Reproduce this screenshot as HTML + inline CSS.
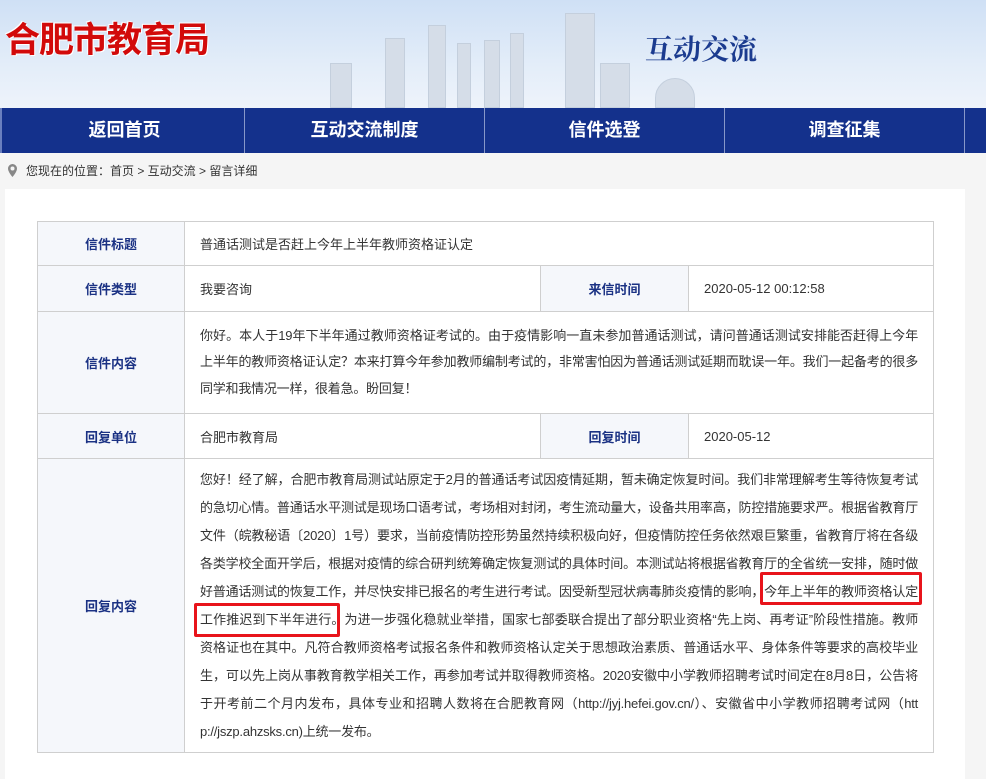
<!DOCTYPE html>
<html><head><meta charset="utf-8"><style>
*{margin:0;padding:0;box-sizing:border-box}
body{width:986px;height:767px;overflow:hidden;background:#f5f5f5;font-family:"Liberation Sans","Noto Sans CJK SC",sans-serif;position:relative}
.hdr{height:108px;background:linear-gradient(180deg,#cfe0f5 0%,#e3edf9 60%,#eef3fa 100%);position:relative;overflow:hidden}
.logo{position:absolute;left:5px;top:12px;font-size:35px;font-weight:bold;color:#d20a0a;letter-spacing:-1px;text-shadow:1px 1px 0 #fff,-1px -1px 0 #fff}
.sub{position:absolute;left:645px;top:28px;font-size:28px;font-weight:bold;color:#1b3b8f;font-family:"Noto Serif CJK SC","Liberation Serif",serif}
.bld{position:absolute;bottom:0;background:#d5dde8;border:1px solid #c4cfdd}
.nav{height:45px;background:#14318c;display:flex;padding-left:3px;border-left:2px solid #6a7fbf}
.nav div{width:240px;border-right:1px solid #8797c9;color:#fff;font-weight:bold;font-size:18px;text-align:center;line-height:45px}
.bc{height:36px;font-size:12px;color:#333;line-height:36px;padding-left:26px;position:relative}
.pin{position:absolute;left:8px;top:11px;width:9px;height:13px}
.panel{position:absolute;left:5px;top:189px;width:960px;height:590px;background:#fff}
table{position:absolute;left:37px;top:221px;width:897px;border-collapse:collapse;font-size:13px;color:#333;table-layout:fixed}
td{border:1px solid #cfcfcf;padding:0 15px;vertical-align:middle;overflow:hidden}
td.l{background:#f5f7fb;color:#1b3284;font-weight:bold;text-align:center;padding:0}
.ln{text-align:justify;text-align-last:justify;white-space:nowrap;height:26.5px;line-height:26.5px;letter-spacing:-0.22px}
.r .ln{height:28px;line-height:28px}
.box{position:absolute;border:3px solid #e8141b;border-radius:2px}
</style></head><body>
<div class="hdr">
<div class="bld" style="left:330px;width:22px;height:45px"></div>
<div class="bld" style="left:385px;width:20px;height:70px"></div>
<div class="bld" style="left:428px;width:18px;height:83px"></div>
<div class="bld" style="left:457px;width:14px;height:65px"></div>
<div class="bld" style="left:484px;width:16px;height:68px"></div>
<div class="bld" style="left:510px;width:14px;height:75px"></div>
<div class="bld" style="left:565px;width:30px;height:95px"></div>
<div class="bld" style="left:600px;width:30px;height:45px"></div>
<div class="bld" style="left:655px;width:40px;height:30px;border-radius:30px 30px 0 0"></div>
<div class="logo">合肥市教育局</div>
<div class="sub">互动交流</div>
</div>
<div class="nav"><div>返回首页</div><div>互动交流制度</div><div>信件选登</div><div>调查征集</div></div>
<div class="bc"><svg class="pin" viewBox="0 0 9 13"><path d="M4.5 0A4.5 4.5 0 0 0 0 4.5C0 8 4.5 13 4.5 13S9 8 9 4.5A4.5 4.5 0 0 0 4.5 0zm0 6.5a2 2 0 1 1 0-4 2 2 0 0 1 0 4z" fill="#888"/></svg>您现在的位置：首页 &gt; 互动交流 &gt; 留言详细</div>
<div class="panel"></div>
<table>
<colgroup><col style="width:147px"><col style="width:356px"><col style="width:148px"><col></colgroup>
<tr style="height:44px"><td class="l">信件标题</td><td colspan="3">普通话测试是否赶上今年上半年教师资格证认定</td></tr>
<tr style="height:46px"><td class="l">信件类型</td><td>我要咨询</td><td class="l">来信时间</td><td>2020-05-12 00:12:58</td></tr>
<tr style="height:102px"><td class="l">信件内容</td><td colspan="3">
<div class="ln">你好。本人于19年下半年通过教师资格证考试的。由于疫情影响一直未参加普通话测试，请问普通话测试安排能否赶得上今年</div>
<div class="ln">上半年的教师资格证认定？本来打算今年参加教师编制考试的，非常害怕因为普通话测试延期而耽误一年。我们一起备考的很多</div>
<div class="ln" style="text-align-last:left">同学和我情况一样，很着急。盼回复！</div></td></tr>
<tr style="height:45px"><td class="l">回复单位</td><td>合肥市教育局</td><td class="l">回复时间</td><td>2020-05-12</td></tr>
<tr style="height:294px" class="r"><td class="l">回复内容</td><td colspan="3" style="padding-top:0">
<div class="ln">您好！经了解，合肥市教育局测试站原定于2月的普通话考试因疫情延期，暂未确定恢复时间。我们非常理解考生等待恢复考试</div>
<div class="ln">的急切心情。普通话水平测试是现场口语考试，考场相对封闭，考生流动量大，设备共用率高，防控措施要求严。根据省教育厅</div>
<div class="ln">文件（皖教秘语〔2020〕1号）要求，当前疫情防控形势虽然持续积极向好，但疫情防控任务依然艰巨繁重，省教育厅将在各级</div>
<div class="ln">各类学校全面开学后，根据对疫情的综合研判统筹确定恢复测试的具体时间。本测试站将根据省教育厅的全省统一安排，随时做</div>
<div class="ln">好普通话测试的恢复工作，并尽快安排已报名的考生进行考试。因受新型冠状病毒肺炎疫情的影响，今年上半年的教师资格认定</div>
<div class="ln">工作推迟到下半年进行。为进一步强化稳就业举措，国家七部委联合提出了部分职业资格“先上岗、再考证”阶段性措施。教师</div>
<div class="ln">资格证也在其中。凡符合教师资格考试报名条件和教师资格认定关于思想政治素质、普通话水平、身体条件等要求的高校毕业</div>
<div class="ln">生，可以先上岗从事教育教学相关工作，再参加考试并取得教师资格。2020安徽中小学教师招聘考试时间定在8月8日，公告将</div>
<div class="ln">于开考前二个月内发布，具体专业和招聘人数将在合肥教育网（http://jyj.hefei.gov.cn/）、安徽省中小学教师招聘考试网（htt</div>
<div class="ln" style="text-align-last:left">p://jszp.ahzsks.cn)上统一发布。</div>
</td></tr>
</table>
<div class="box" style="left:760px;top:572px;width:162px;height:33px"></div>
<div class="box" style="left:194px;top:603px;width:146px;height:34px"></div>
</body></html>
